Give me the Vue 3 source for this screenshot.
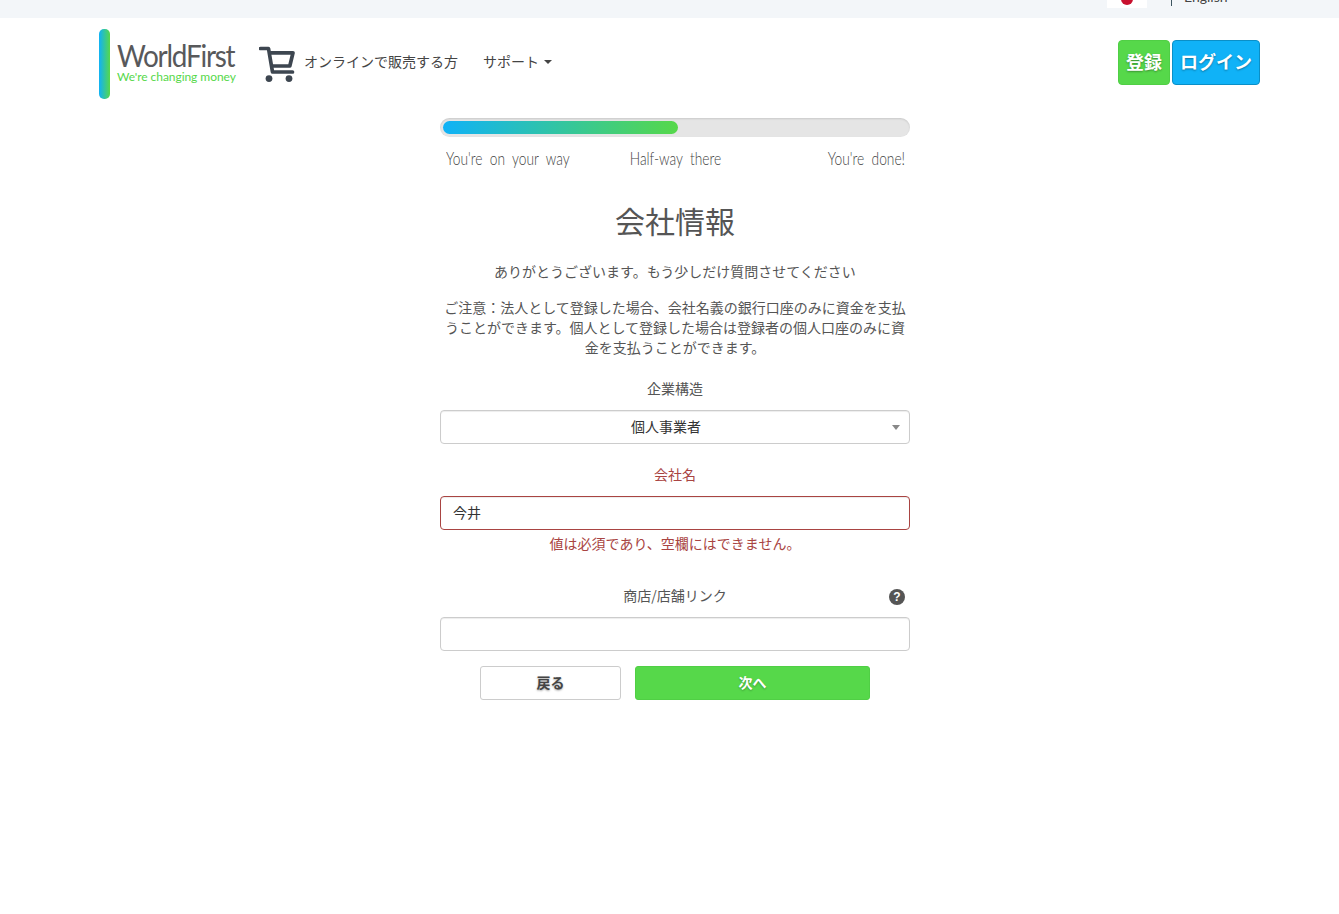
<script setup>
const notes = ["You're on your way", "Half-way there", "You're done!"];
</script>

<template>
  <div class="page">
    <div class="topbar">
      <div class="topbar-in">
        <span class="flag"><i></i></span>
        <span class="sep"></span>
        <span class="lang">English</span>
      </div>
    </div>

    <header class="head">
      <div class="logo">
        <span class="logo-bar"></span>
        <span class="logo-text">
          <span class="logo-name">WorldFirst</span>
          <span class="logo-tag">We're changing money</span>
        </span>
      </div>
      <svg class="cart" width="36" height="36" viewBox="0 0 36 36" aria-hidden="true">
        <path d="M1.500 2.500h8l4 23.500h20" fill="none" stroke="#3d4650" stroke-width="3.700" stroke-linejoin="round" stroke-linecap="round" />
        <path d="M11 6.800h23l-3.200 13.200H13.500" fill="none" stroke="#3d4650" stroke-width="3.700" stroke-linejoin="round" />
        <circle cx="10" cy="32.600" r="3.400" fill="#3d4650" />
        <circle cx="30" cy="32.600" r="3.400" fill="#3d4650" />
      </svg>
      <span class="nav-link">オンラインで販売する方</span>
      <span class="nav-link support">サポート<i class="caret"></i></span>
      <div class="actions">
        <button class="hbtn green">登録</button>
        <button class="hbtn blue">ログイン</button>
      </div>
    </header>

    <main class="form">
      <div class="track"><div class="fill"></div></div>
      <div class="notes">
        <span v-for="n in notes" :key="n" class="note">{{ n }}</span>
      </div>

      <h1>会社情報</h1>
      <p class="lead">ありがとうございます。もう少しだけ質問させてください</p>
      <p class="notice">ご注意：法人として登録した場合、会社名義の銀行口座のみに資金を支払うことができます。個人として登録した場合は登録者の個人口座のみに資金を支払うことができます。</p>

      <label class="lab first">企業構造</label>
      <div class="field select">個人事業者<i class="sel-caret"></i></div>

      <label class="lab err second">会社名</label>
      <div class="field input invalid">今井</div>
      <div class="errmsg">値は必須であり、空欄にはできません。</div>

      <label class="lab third">
        商店/店舗リンク
        <span class="help">?</span>
      </label>
      <div class="field input"></div>

      <div class="btns">
        <button class="back">戻る</button>
        <button class="next">次へ</button>
      </div>
    </main>
  </div>
</template>

<style>
html, body { margin: 0; background: #fff; }
</style>

<style scoped>
.page {
  min-height: 914px;
  font-family: "Noto Sans CJK JP", "Liberation Sans", sans-serif;
  color: #555;
  font-size: 14px;
}
.topbar { height: 18px; background: #f3f6f9; overflow: hidden; }
.topbar-in {
  width: 1161px;
  margin-left: 99px;
  height: 8px;
  padding-left: 1008px;
  box-sizing: border-box;
  display: flex;
  align-items: flex-end;
}
.flag {
  width: 40px;
  height: 8px;
  background: #fff;
  display: flex;
  justify-content: center;
  overflow: hidden;
  flex: none;
}
.flag i {
  width: 12px;
  height: 12px;
  margin-top: -7px;
  border-radius: 50%;
  background: #c8102e;
  flex: none;
}
.sep {
  width: 1px;
  height: 6px;
  margin-left: 24px;
  background: #3d5560;
  align-self: flex-start;
  flex: none;
}
.lang {
  margin-left: 12px;
  font: 14px/20px "Lato", sans-serif;
  color: #444;
  flex: none;
  margin-bottom: 1px;
}

.head {
  width: 1161px;
  margin-left: 99px;
  height: 89px;
  display: flex;
  align-items: center;
  box-sizing: border-box;
}
.logo {
  display: flex;
  align-items: stretch;
  width: 137px;
  height: 70px;
  margin-top: 3px;
  flex: none;
}
.logo-bar {
  width: 11px;
  flex: none;
  border-radius: 5px;
  background: linear-gradient(90deg, #10b2f7, #56d84a);
}
.logo-text {
  display: flex;
  flex-direction: column;
  margin-left: 7px;
  padding-top: 12px;
}
.logo-name {
  font: 31px/28px "Lato", sans-serif;
  letter-spacing: -1.400px;
  color: #58595b;
  transform: scaleX(0.9);
  transform-origin: left center;
  white-space: nowrap;
}
.logo-tag {
  font: 12px/15px "Lato", sans-serif;
  color: #56d84a;
  letter-spacing: -0.050px;
  white-space: nowrap;
}
.cart { margin-left: 23px; margin-top: 3px; flex: none; }
.nav-link { font-size: 14px; color: #444; flex: none; margin-left: 9px; margin-top: -3px; }
.support { margin-left: 25px; display: inline-flex; align-items: center; }
.caret {
  width: 0;
  height: 0;
  margin-left: 5px;
  margin-top: 2px;
  border: 4px solid transparent;
  border-top-color: #444;
  border-bottom: 0;
}
.actions { margin-left: auto; display: flex; gap: 2px; margin-top: -1px; }
.hbtn {
  height: 45px;
  padding: 0 0 2px;
  border-radius: 4px;
  font: 700 18px "Noto Sans CJK JP", sans-serif;
  color: #fff;
  text-shadow: 0 1px 2px rgba(0, 0, 0, 0.35);
}
.green { width: 52px; background: #56d84a; border: 1px solid #50cf45; }
.blue { width: 88px; background: #10b2f7; border: 1px solid #0a8fc7; }

.form { width: 470px; margin: 11px 0 0 440px; text-align: center; }
.track {
  height: 19px;
  padding: 3px;
  box-sizing: border-box;
  border-radius: 10px;
  background: #e5e5e5;
  box-shadow: inset 0 1px 2px rgba(0, 0, 0, 0.12);
}
.fill {
  width: 235px;
  height: 13px;
  border-radius: 7px;
  background: linear-gradient(90deg, #10b2f7, #56d84a);
}
.notes {
  display: grid;
  grid-template-columns: 1fr auto 1fr;
  padding: 0 5px 0 6px;
  margin-top: 9px;
  height: 25px;
}
.note {
  font: 300 17px/26px "Lato", sans-serif;
  color: #444;
  white-space: nowrap;
  word-spacing: 4.500px;
  text-align: left;
  transform: scaleX(0.81);
  transform-origin: left center;
}
.note:nth-child(2) { transform-origin: center; }
.note:nth-child(3) { transform-origin: right center; text-align: right; }
h1 {
  margin: 29px 0 0;
  font-size: 30px;
  line-height: 40px;
  font-weight: 400;
  color: #555;
}
.lead { margin: 21px 0 0; line-height: 20px; }
.notice { margin: 16px 0 0; line-height: 20px; padding: 0 4px; }
.lab { display: block; line-height: 20px; position: relative; }
.first { margin-top: 21px; }
.second { margin-top: 20px; }
.third { margin-top: 32px; }
.err { color: #a94442; }
.field {
  height: 34px;
  margin-top: 12px;
  box-sizing: border-box;
  border: 1px solid #ccc;
  border-radius: 4px;
  background: #fff;
  box-shadow: inset 0 1px 1px rgba(0, 0, 0, 0.075);
  line-height: 30px;
  color: #333;
}
.select { position: relative; padding-right: 18px; }
.sel-caret {
  position: absolute;
  right: 9px;
  top: 14px;
  border: 4px solid transparent;
  border-top: 5px solid #888;
  border-bottom: 0;
}
.input { text-align: left; padding: 0 12px; }
.invalid { border-color: #a94442; }
.errmsg { color: #a94442; line-height: 20px; margin-top: 3px; }
.help {
  position: absolute;
  right: 5px;
  top: 4px;
  width: 16px;
  height: 16px;
  border-radius: 50%;
  background: #555;
  color: #fff;
  font: 700 12px/16px "Liberation Sans", sans-serif;
  text-align: center;
}
.btns { display: flex; gap: 14px; margin: 15px 0 0 40px; }
.btns button {
  height: 34px;
  padding: 0 0 2px;
  border-radius: 3px;
  font: 700 14px "Noto Sans CJK JP", sans-serif;
}
.back {
  width: 141px;
  background: #fff;
  border: 1px solid #ccc;
  color: #444;
  text-shadow: 0 1px 2px rgba(0, 0, 0, 0.35);
}
.next {
  width: 235px;
  background: #56d84a;
  border: 1px solid #50cf45;
  color: #fff;
  text-shadow: 0 1px 2px rgba(0, 0, 0, 0.3);
}
</style>
